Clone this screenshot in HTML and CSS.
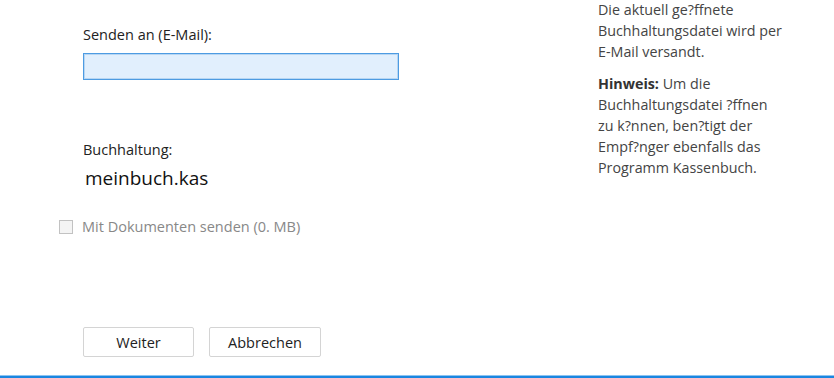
FILE: index.html
```html
<html lang="de">
  <head>
    <meta charset="UTF-8" />
    <meta name="viewport" content="width=device-width, initial-scale=1.0" />
    <title>Per E-Mail senden</title>
    <link rel="stylesheet" href="styles.css">
  </head>
  <body>
    <div class="dialog">
      <div class="main">
        <label class="label" for="email">Senden an (E-Mail):</label>
        <input class="email" id="email" type="text" />

        <div class="label book-label">Buchhaltung:</div>
        <div class="book">meinbuch.kas</div>

        <label class="docs">
          <span class="box"></span>
          <span>Mit Dokumenten senden (0. MB)</span>
        </label>

        <div class="buttons">
          <button class="btn">Weiter</button>
          <button class="btn">Abbrechen</button>
        </div>
      </div>

      <!-- info text -->
      <div class="info">
        <p>Die aktuell ge?ffnete<br>Buchhaltungsdatei wird per<br>E-Mail versandt.</p>
        <p><b>Hinweis:</b> Um die<br>Buchhaltungsdatei ?ffnen<br>zu k?nnen, ben?tigt der<br>Empf?nger ebenfalls das<br>Programm Kassenbuch.</p>
      </div>
    </div>
    <div class="bottom-line"></div>
  </body>
</html>
```

FILE: styles.css
```css
* {
  margin: 0;
  padding: 0;
  box-sizing: border-box;
}
body {
  width: 834px;
  height: 378px;
  background: #fff;
  font-family: "Open Sans", "Noto Sans", sans-serif;
  font-size: 14.5px;
  color: #222;
  display: flex;
  flex-direction: column;
  overflow: hidden;
}
.dialog {
  flex: 1;
  display: flex;
}
.main {
  width: 515px;
  padding: 25px 0 0 83px;
  display: flex;
  flex-direction: column;
  align-items: flex-start;
}
.label {
  line-height: 20px;
}
.email {
  margin-top: 8px;
  width: 316px;
  height: 27px;
  background: #e1effd;
  border: 1px solid #4d9be2;
  box-shadow: inset 0 0 0 1px #b7d6f3;
  outline: none;
}
.book-label {
  margin-top: 60px;
}
.book {
  margin-top: 6px;
  font-size: 19px;
  line-height: 24px;
  color: #111;
  padding-left: 2px;
}
.docs {
  margin: 27px 0 0 -24px;
  display: flex;
  align-items: center;
  gap: 9px;
  color: #888;
  line-height: 20px;
}
.box {
  width: 14px;
  height: 14px;
  border: 1px solid #c2c2c2;
  background: #f4f4f4;
}
.buttons {
  margin-top: 90px;
  display: flex;
  gap: 15px;
}
.btn {
  width: 111px;
  height: 30px;
  background: #fff;
  border: 1px solid #d4d4d4;
  border-radius: 2px;
  font-family: inherit;
  font-size: 14.5px;
  color: #222;
}
.btn + .btn {
  width: 112px;
}

/* info column */
.info {
  margin-top: -1px;
  padding-left: 83px;
  font-size: 14.3px;
  color: #444;
  line-height: 21px;
}
.info p {
  margin-bottom: 11px;
  white-space: nowrap;
}
.info b {
  color: #333;
}
.bottom-line {
  height: 3px;
  border-top: 1px solid #8cc4f2;
  background: #1a86e0;
}
```
